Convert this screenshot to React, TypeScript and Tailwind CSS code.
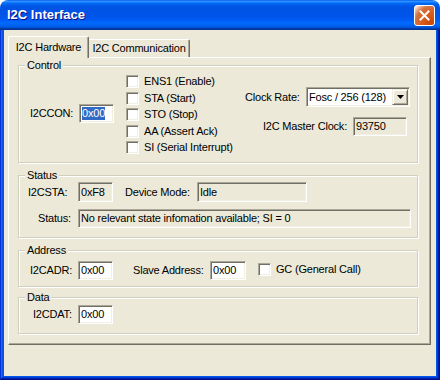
import React from 'react';

const sunken =
  'border border-t-[#aca899] border-l-[#aca899] border-r-white border-b-white shadow-[inset_1px_1px_0_#716f64,inset_-1px_-1px_0_#f1efe2]';

const Field = ({
  className,
  value,
  readOnly,
  selected,
}: {
  className: string;
  value: string;
  readOnly?: boolean;
  selected?: boolean;
}) => (
  <div
    className={`${sunken} flex items-center pl-[2px] leading-none whitespace-nowrap ${
      readOnly ? 'bg-[#ece9d8]' : 'bg-white'
    } ${className}`}
  >
    {selected ? <span className="bg-[#316ac5] py-[1px] text-white">{value}</span> : value}
  </div>
);

const CheckBox = () => <div className={`${sunken} h-[13px] w-[13px] shrink-0 bg-white`} />;

const CheckRow = ({ label, className }: { label: string; className: string }) => (
  <div className={`flex h-[13px] items-center ${className}`}>
    <CheckBox />
    <span className="ml-[5px] whitespace-nowrap">{label}</span>
  </div>
);

const GroupBox = ({
  label,
  className,
  children,
}: {
  label: string;
  className: string;
  children: React.ReactNode;
}) => (
  <div
    className={`relative w-[400px] border border-[#d0d0bf] shadow-[inset_1px_1px_0_#fff,1px_1px_0_#fff] ${className}`}
  >
    <span className="absolute -top-[8px] left-[6px] bg-[#ece9d8] px-[2px] leading-[14px]">{label}</span>
    {children}
  </div>
);

export default function App() {
  return (
    <div className="h-[380px] w-[440px] bg-white font-['Liberation_Sans',Arial,sans-serif] text-[11px] tracking-[-0.2px] text-black">
      <div className="flex h-full flex-col overflow-hidden rounded-t-[8px]">
        {/* title bar */}
        <div className="flex h-[30px] shrink-0 items-center justify-between bg-[linear-gradient(to_bottom,#0058ee_0%,#3593ff_4%,#288eff_6%,#127dff_8%,#036ffc_10%,#0262ee_14%,#0057e5_20%,#0054e3_24%,#0055eb_56%,#005bf5_66%,#026afe_76%,#0062ef_86%,#0052d6_92%,#0040ab_94%,#003092_100%)] pl-[7px] pr-[5px]">
          <span className="text-[13px] font-bold tracking-normal text-white [text-shadow:1px_1px_0_#0f1089]">
            I2C Interface
          </span>
          <div className="flex h-[21px] w-[21px] items-center justify-center rounded-[3px] border border-white bg-[radial-gradient(circle_at_90%_90%,#cc4600_0%,#dc6527_55%,#cd7546_70%,#ffccb2_90%,#fff_100%)]">
            <svg width="11" height="11" viewBox="0 0 11 11">
              <path d="M1.5 1.5l8 8M9.5 1.5l-8 8" stroke="#fff" strokeWidth="2" strokeLinecap="square" />
            </svg>
          </div>
        </div>

        {/* frame + client */}
        <div className="flex flex-1 flex-col bg-[#0055ea] px-[4px] pb-[4px] shadow-[inset_-1px_-1px_0_#00138c,inset_1px_0_0_#0831d9,inset_-2px_-2px_0_#001ea0,inset_2px_0_0_#166aee,inset_-3px_-3px_0_#003bda,inset_3px_0_0_#0855dd]">
          <div className="flex-1 bg-[#ece9d8] pl-[4px]">
            {/* tabs */}
            <div className="relative z-10 flex h-[27px] items-end">
              <div className="-mb-[1px] flex h-[22px] w-[81px] items-center justify-center rounded-t-[2px] border-l border-t border-white bg-[#ece9d8] shadow-[inset_-1px_0_0_#aca899] [border-right:1px_solid_#716f64]">
                I2C Hardware
              </div>
              <div className="flex h-[18px] w-[101px] items-center justify-center rounded-tr-[2px] border-t border-white shadow-[inset_-1px_0_0_#aca899] [border-right:1px_solid_#716f64]">
                I2C Communication
              </div>
            </div>

            {/* panel */}
            <div className="w-[423px] border-l border-t border-white pb-[10px] pl-[9px] pt-[7px] shadow-[inset_-1px_-1px_0_#aca899] [border-bottom:1px_solid_#716f64] [border-right:1px_solid_#716f64]">
              <GroupBox label="Control" className="h-[98px]">
                <div className="flex items-start">
                  <div className="ml-[11px] mt-[38px] flex items-center">
                    <span className="w-[49px]">I2CCON:</span>
                    <Field className="h-[19px] w-[35px]" value="0x00" selected />
                  </div>
                  <div className="ml-[12px] flex w-[119px] flex-col">
                    <CheckRow label="ENS1 (Enable)" className="mt-[9px]" />
                    <CheckRow label="STA (Start)" className="mt-[4px]" />
                    <CheckRow label="STO (Stop)" className="mt-[3px]" />
                    <CheckRow label="AA (Assert Ack)" className="mt-[4px]" />
                    <CheckRow label="SI (Serial Interrupt)" className="mt-[3px]" />
                  </div>
                  <div className="mt-[21px] flex flex-col">
                    <div className="flex items-center">
                      <span className="w-[61px]">Clock Rate:</span>
                      <div className={`${sunken} relative flex h-[20px] w-[104px] items-center bg-white pl-[2px]`}>
                        <span className="whitespace-nowrap">Fosc / 256 (128)</span>
                        <div className="absolute right-[1px] top-[1px] flex h-[16px] w-[16px] items-center justify-center border border-b-[#716f64] border-l-[#f1efe2] border-r-[#716f64] border-t-[#f1efe2] bg-[#ece9d8] shadow-[inset_1px_1px_0_#fff,inset_-1px_-1px_0_#aca899]">
                          <svg width="7" height="4" viewBox="0 0 7 4">
                            <path d="M0 0h7L3.5 4z" fill="#000" />
                          </svg>
                        </div>
                      </div>
                    </div>
                    <div className="ml-[18px] mt-[10px] flex items-center">
                      <span className="w-[90px]">I2C Master Clock:</span>
                      <Field className="h-[19px] w-[54px]" value="93750" readOnly />
                    </div>
                  </div>
                </div>
              </GroupBox>

              <GroupBox label="Status" className="mt-[12px] h-[63px]">
                <div className="mt-[6px] flex items-center pl-[9px]">
                  <span className="w-[50px]">I2CSTA:</span>
                  <Field className="h-[20px] w-[35px]" value="0xF8" readOnly />
                  <span className="ml-[12px] w-[72px]">Device Mode:</span>
                  <Field className="h-[20px] w-[110px]" value="Idle" readOnly />
                </div>
                <div className="mt-[7px] flex items-center pl-[19px]">
                  <span className="w-[40px]">Status:</span>
                  <Field
                    className="h-[19px] w-[333px]"
                    value="No relevant state infomation available; SI = 0"
                    readOnly
                  />
                </div>
              </GroupBox>

              <GroupBox label="Address" className="mt-[12px] h-[37px]">
                <div className="mt-[10px] flex items-center pl-[11px]">
                  <span className="w-[48px]">I2CADR:</span>
                  <Field className="h-[19px] w-[35px]" value="0x00" />
                  <span className="ml-[20px] w-[77px]">Slave Address:</span>
                  <Field className="h-[19px] w-[36px]" value="0x00" />
                  <CheckRow label="GC (General Call)" className="ml-[12px] -mt-[2px]" />
                </div>
              </GroupBox>

              <GroupBox label="Data" className="mt-[10px] h-[37px]">
                <div className="mt-[7px] flex items-center pl-[14px]">
                  <span className="w-[45px]">I2CDAT:</span>
                  <Field className="h-[19px] w-[35px]" value="0x00" />
                </div>
              </GroupBox>
            </div>
          </div>
        </div>
      </div>
    </div>
  );
}
